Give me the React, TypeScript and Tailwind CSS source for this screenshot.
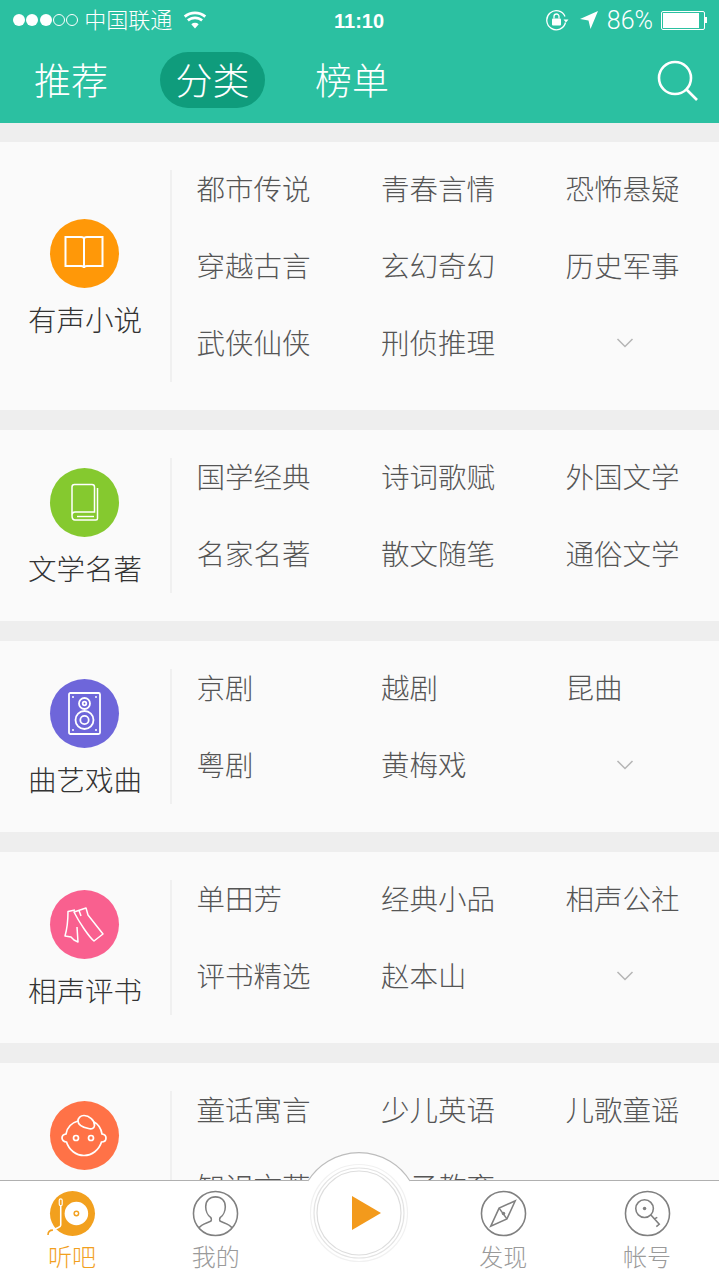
import React from 'react';

const CJK = { fontFamily: '"Noto Sans CJK SC", sans-serif' };

const BookOpen = () => (
  <svg width="40" height="36" viewBox="0 0 40 36" fill="none" stroke="white" strokeWidth="2">
    <path d="M1.500 2H17c2 0 3 .5 3 2v29c0-1.500-1-2-3-2H1.500z" />
    <path d="M38.500 2H23c-2 0-3 .5-3 2v29c0-1.500 1-2 3-2h15.500z" />
  </svg>
);

const BookClosed = () => (
  <svg width="30" height="40" viewBox="0 0 30 40" fill="none" stroke="white" strokeWidth="1.500">
    <path d="M3 32V4c0-1.500 1-2.500 2.500-2.500H23c1.500 0 2.500 1 2.500 2.500v25H6c-2 0-3 1.200-3 3.500 0 2.500 1 4.500 3 4.500h21c1 0 1.500-.5 1.500-1.500V5" />
    <path d="M8 33.500h17" strokeWidth="1.400" />
  </svg>
);

const Speaker = () => (
  <svg width="33" height="43" viewBox="0 0 33 43" fill="none" stroke="white" strokeWidth="1.800">
    <rect x="1" y="1" width="31" height="41" rx="1.500" />
    <circle cx="16.500" cy="11.500" r="5.500" />
    <circle cx="16.500" cy="11.500" r="1.800" />
    <circle cx="16.500" cy="28" r="9" />
    <circle cx="16.500" cy="28" r="4.200" />
    <g fill="white" stroke="none">
      <circle cx="5" cy="5" r="1" />
      <circle cx="28" cy="5" r="1" />
      <circle cx="5" cy="38" r="1" />
      <circle cx="28" cy="38" r="1" />
    </g>
  </svg>
);

const Scroll = () => (
  <svg width="40" height="36" viewBox="0 0 40 36" fill="none" stroke="white" strokeWidth="1.500" strokeLinejoin="round">
    <path d="M11 3 4 4.500C4 12 3 22 1 29l6 1 3 3 4 2-1-15" />
    <path d="M10 5 22 1l2 7 15 19-9 7C25 30 15 15 10 5z" />
    <path d="M15 3.500 17 9" />
  </svg>
);

const Baby = () => (
  <svg width="46" height="44" viewBox="0 0 46 44" fill="none" stroke="white" strokeWidth="1.700">
    <path d="M17 7C10 9 6 14 5 20c-3 .5-4 2.500-4 4s1.500 4 4.500 4C8 36 15 41.500 23 41.500S38 36 40.500 28c3 0 4.500-2 4.500-4s-1-3.500-4-4c-1-6-4-10-8-12" />
    <path d="M17 7c0-3 2.500-5.500 6-5.500 5 0 11 5 10.500 10-.3 3-3 4-6 3C23 13.500 17 12 17 7z" />
    <circle cx="15" cy="24" r="2.500" />
    <circle cx="30" cy="24" r="2.500" />
  </svg>
);

const Chevron = () => (
  <svg width="18" height="10" viewBox="0 0 18 10" fill="none" stroke="#b5b5b5" strokeWidth="1.500">
    <path d="M1.500 1 9 8.500 16.500 1" />
  </svg>
);

const StatusBar = () => (
  <div className="flex h-[40px] items-center text-white relative">
    <div className="flex items-center gap-[1.300px] pl-[13px]">
      <span className="w-[12px] h-[12px] rounded-full bg-white" />
      <span className="w-[12px] h-[12px] rounded-full bg-white" />
      <span className="w-[12px] h-[12px] rounded-full bg-white" />
      <span className="w-[12px] h-[12px] rounded-full border border-white" />
      <span className="w-[12px] h-[12px] rounded-full border border-white" />
    </div>
    <span className="ml-[6px] mb-[4px] text-[22px] leading-none font-light" style={CJK}>中国联通</span>
    <svg className="ml-[11px]" width="24" height="18" viewBox="0 0 24 18" fill="white">
      <path d="M12 17.500 8.300 13.200c2.200-1.800 5.200-1.800 7.400 0z" />
      <path d="M5.800 10.400 4 8.300c4.600-3.900 11.400-3.900 16 0l-1.800 2.100c-3.600-3-8.800-3-12.400 0z" />
      <path d="M2.600 6.700.8 4.600c6.400-5.500 16-5.500 22.400 0l-1.800 2.100C16 2.200 8 2.200 2.600 6.700z" />
    </svg>
    <span className="absolute left-[334px] top-[9px] text-[20px] leading-[24px] font-bold" style={{ fontFamily: '"Liberation Sans", sans-serif' }}>11:10</span>
    <div className="ml-auto flex items-center pr-[12px]">
      <svg width="23" height="22" viewBox="0 0 23 22" fill="none" stroke="white" strokeWidth="1.300">
        <path d="M19.500 13.500A9.500 9.500 0 1 1 19 7.500" />
        <path d="M17.500 10.500h5l-2.500 3z" fill="white" stroke="none" />
        <rect x="6" y="9.500" width="9" height="7" rx="1" fill="white" stroke="none" />
        <path d="M8 9.500V7.500a2.500 2.500 0 0 1 5 0v2" />
      </svg>
      <svg className="ml-[11px]" width="18" height="18" viewBox="0 0 18 18" fill="white">
        <path d="M18 0 0 8l8.500 1.500L10.500 18z" />
      </svg>
      <span className="ml-[9px] text-[25px] leading-none font-light" style={{ fontFamily: 'Roboto, sans-serif' }}>86%</span>
      <div className="ml-[8px] flex items-center">
        <div className="w-[44px] h-[19px] border border-white rounded-[2px] p-[1px]">
          <div className="w-[36px] h-full bg-white" />
        </div>
        <span className="w-[2px] h-[6px] bg-white" />
      </div>
    </div>
  </div>
);

const Header = () => (
  <div className="bg-[#2bc0a1] h-[123px] shrink-0">
    <StatusBar />
    <div className="flex items-center h-[83px] pb-[4px] text-white text-[37px] leading-none" style={CJK}>
      <span className="ml-[34px] font-light">推荐</span>
      <span className="ml-[52px] w-[105px] h-[56px] rounded-full bg-[#0f9c7c] flex items-center justify-center font-light">分类</span>
      <span className="ml-[50px] font-light">榜单</span>
      <svg className="ml-auto mr-[20px] mt-[2px]" width="42" height="42" viewBox="0 0 42 42" fill="none" stroke="white" strokeWidth="2.600">
        <circle cx="18" cy="18" r="16" />
        <path d="M29.500 29.500 40 40" />
      </svg>
    </div>
  </div>
);

type Section = {
  title: string;
  color: string;
  icon: React.ReactNode;
  items: string[];
  more?: boolean;
};

const SECTIONS: Section[] = [
  { title: '有声小说', color: 'bg-[#ff9808]', icon: <BookOpen />, items: ['都市传说', '青春言情', '恐怖悬疑', '穿越古言', '玄幻奇幻', '历史军事', '武侠仙侠', '刑侦推理'], more: true },
  { title: '文学名著', color: 'bg-[#85c92f]', icon: <BookClosed />, items: ['国学经典', '诗词歌赋', '外国文学', '名家名著', '散文随笔', '通俗文学'] },
  { title: '曲艺戏曲', color: 'bg-[#6e66da]', icon: <Speaker />, items: ['京剧', '越剧', '昆曲', '粤剧', '黄梅戏'], more: true },
  { title: '相声评书', color: 'bg-[#f9608f]', icon: <Scroll />, items: ['单田芳', '经典小品', '相声公社', '评书精选', '赵本山'], more: true },
  { title: '少儿天地', color: 'bg-[#ff7247]', icon: <Baby />, items: ['童话寓言', '少儿英语', '儿歌童谣', '知识文萃', '亲子教育'] },
];

const Card = ({ s }: { s: Section }) => (
  <div className="bg-[#fafafa] flex shrink-0" style={CJK}>
    <div className="w-[172px] shrink-0 my-[28px] border-r-2 border-[#f0f0f0] flex flex-col items-center justify-center pr-[2px] pt-[5px]">
      <div className={`w-[69px] h-[69px] rounded-full flex items-center justify-center ${s.color}`}>{s.icon}</div>
      <span className="mt-[12px] ml-[2px] text-[28.500px] leading-[38px] font-light text-[#333333]">{s.title}</span>
    </div>
    <div className="grid grid-cols-[184.500px_184.500px_1fr] auto-rows-[77px] pl-[24.500px] pt-[8px] pb-[28.500px] flex-1 items-center text-[28.500px] leading-none font-light text-[#555555]">
      {s.items.map(t => <span key={t}>{t}</span>)}
      {s.more && <span className="flex justify-center w-[118px]"><Chevron /></span>}
    </div>
  </div>
);

const TabIcon = ({ children }: { children: React.ReactNode }) => (
  <svg width="47" height="47" viewBox="0 0 48 48" fill="none" stroke="#808080" strokeWidth="1.600">
    <circle cx="24" cy="24" r="22.500" />
    {children}
  </svg>
);

const TabItem = ({ label, active, icon }: { label: string; active?: boolean; icon: React.ReactNode }) => (
  <div className="flex flex-col items-center pt-[9px]">
    {icon}
    <span className={`mt-[4px] text-[24px] leading-[30px] font-light ${active ? 'text-[#f2a01e]' : 'text-[#9a9a9a]'}`}>{label}</span>
  </div>
);

const TabBar = () => (
  <div className="relative h-[100px] shrink-0 bg-white border-t border-[#b0b0b0] grid grid-cols-5" style={CJK}>
    <TabItem
      label="听吧"
      active
      icon={
        <svg width="49" height="47" viewBox="0 0 50 48" fill="none">
          <circle cx="26" cy="24" r="23" fill="#f2a01e" />
          <circle cx="30" cy="24" r="12" fill="white" />
          <circle cx="30" cy="24" r="3" fill="#f2a01e" />
          <circle cx="30" cy="24" r="1.500" fill="white" />
          <path d="M14 14v22c0 3-6 2-7 6l-.5 4" stroke="white" strokeWidth="1.600" />
          <path d="M1 46c0-4 3-5 5-5" stroke="#f2a01e" strokeWidth="1.600" />
          <rect x="12.500" y="9" width="3" height="7" rx="1.500" fill="#f2a01e" stroke="white" strokeWidth="1.200" />
        </svg>
      }
    />
    <TabItem
      label="我的"
      icon={
        <TabIcon>
          <path d="M7 39c2-4 7-5 12-7 1-1 1-3 0-4-3-2-5-7-5-11 0-6 4-10 10-10s10 4 10 10c0 4-2 9-5 11-1 1-1 3 0 4 5 2 10 3 12 7" />
        </TabIcon>
      }
    />
    <div className="relative">
      <svg className="absolute left-1/2 -translate-x-1/2 -top-[29px]" width="122" height="112" viewBox="0 0 122 112" fill="none">
        <path d="M0 29.500h122V112H0z" fill="white" />
        <path d="M9.500 29.500a60 60 0 0 1 103 0" fill="white" />
        <path d="M10 29a60 60 0 0 1 102 0" stroke="#bdbdbd" strokeWidth="1.200" />
        <circle cx="61" cy="61" r="48.500" stroke="#f1f1f1" strokeWidth="1.200" />
        <circle cx="61" cy="61" r="45" stroke="#e4e4e4" strokeWidth="1.200" />
        <circle cx="61" cy="61" r="42" stroke="#dddddd" strokeWidth="1.200" />
        <path d="M54 44v34l29-17z" fill="#f39a1c" />
      </svg>
    </div>
    <TabItem
      label="发现"
      icon={
        <TabIcon>
          <path d="M36 11 27.500 29.500 11 37l8.500-18.500z" />
          <path d="M19.500 18.500l8 11" />
          <circle cx="24" cy="24" r="1.800" fill="#808080" stroke="none" />
        </TabIcon>
      }
    />
    <TabItem
      label="帐号"
      icon={
        <TabIcon>
          <circle cx="21" cy="19" r="9" />
          <circle cx="21" cy="19" r="1.800" fill="#808080" stroke="none" />
          <path d="M27.500 25.500 36 35l-3 2.500M31 29.500l3-1.500" />
        </TabIcon>
      }
    />
  </div>
);

export default function App() {
  return (
    <div className="w-[719px] h-[1280px] flex flex-col overflow-hidden bg-[#eeeeee]">
      <Header />
      <div className="flex-1 min-h-0 overflow-hidden flex flex-col gap-[20.500px] pt-[19px]">
        {SECTIONS.map(s => <Card key={s.title} s={s} />)}
      </div>
      <TabBar />
    </div>
  );
}
